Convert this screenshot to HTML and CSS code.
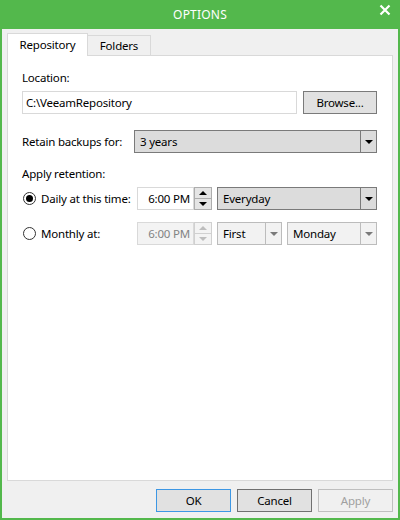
FILE: index.html
```html
<!DOCTYPE html>
<html lang="en">
<head>
    <meta charset="UTF-8">
    <title>Options</title>
    <link rel="stylesheet" href="styles.css">
</head>
<body>
    <div class="window">
        <div class="titlebar">
            <span class="title">OPTIONS</span>
            <span class="close">
                <svg width="12" height="12" viewBox="0 0 12 12">
                    <path d="M1.5 1.5 L10.5 10.5 M10.5 1.5 L1.5 10.5" stroke="#fff" stroke-width="2.2" fill="none"/>
                </svg>
            </span>
        </div>

        <div class="frame">
            <div class="tabs">
                <div class="tab active">Repository</div>
                <div class="tab">Folders</div>
            </div>

            <div class="panel">
                <div class="label">Location:</div>
                <div class="row location-row">
                    <div class="textbox">C:\VeeamRepository</div>
                    <div class="btn browse">Browse...</div>
                </div>

                <div class="row retain-row">
                    <span class="row-label">Retain backups for:</span>
                    <div class="combo retain">
                        <span class="combo-text">3 years</span>
                        <span class="combo-arrow"><i class="tri"></i></span>
                    </div>
                </div>

                <div class="label apply-label">Apply retention:</div>

                <div class="row option-row">
                    <span class="radio checked"></span>
                    <span class="option-label">Daily at this time:</span>
                    <div class="time">
                        <div class="time-box">6:00 PM</div>
                        <div class="spinner">
                            <span class="spin up"></span>
                            <span class="spin down"></span>
                        </div>
                    </div>
                    <div class="combo everyday">
                        <span class="combo-text">Everyday</span>
                        <span class="combo-arrow"><i class="tri"></i></span>
                    </div>
                </div>

                <div class="row option-row monthly">
                    <span class="radio"></span>
                    <span class="option-label">Monthly at:</span>
                    <div class="time disabled">
                        <div class="time-box">6:00 PM</div>
                        <div class="spinner">
                            <span class="spin up"></span>
                            <span class="spin down"></span>
                        </div>
                    </div>
                    <div class="combo disabled first">
                        <span class="combo-text">First</span>
                        <span class="combo-arrow"><i class="tri"></i></span>
                    </div>
                    <div class="combo disabled weekday">
                        <span class="combo-text">Monday</span>
                        <span class="combo-arrow"><i class="tri"></i></span>
                    </div>
                </div>
            </div>

            <div class="actions">
                <div class="btn default">OK</div>
                <div class="btn">Cancel</div>
                <div class="btn disabled">Apply</div>
            </div>
        </div>
    </div>
</body>
</html>
```

FILE: styles.css
```css
* { margin: 0; padding: 0; box-sizing: border-box; }
body {
    font-family: 'Noto Sans', 'Open Sans', sans-serif;
    font-size: 11.5px;
    letter-spacing: -0.2px;
    color: #000;
    background: #f0f0f0;
}
.window {
    width: 400px;
    height: 520px;
    display: flex;
    flex-direction: column;
}
.titlebar {
    height: 29px;
    background: #53b84c;
    color: #fff;
    display: flex;
    align-items: center;
    justify-content: center;
    position: relative;
}
.title { font-size: 12px; letter-spacing: 0.2px; }
.close {
    position: absolute;
    right: 9px;
    top: 4px;
    width: 12px;
    height: 12px;
    display: flex;
}
.frame {
    flex: 1;
    border: 2px solid #53b84c;
    border-top: none;
    padding: 4px 5px 0 5px;
    display: flex;
    flex-direction: column;
}

/* tabs */
.tabs {
    display: flex;
    align-items: flex-end;
    height: 22px;
}
.tab {
    height: 20px;
    width: 63px;
    text-align: center;
    border: 1px solid #d9d9d9;
    border-bottom: none;
    background: #f0f0f0;
    line-height: 19px;
}
.tab + .tab { border-left: none; }
.tab.active {
    width: 81px;
    height: 23px;
    margin-bottom: -1px;
    background: #fff;
    line-height: 22px;
    position: relative;
    z-index: 1;
}
.panel {
    height: 426px;
    background: #fff;
    border: 1px solid #d9d9d9;
    padding: 14px 15px 0 14px;
}
.label { line-height: 16px; }
.row { display: flex; align-items: center; }

.location-row { margin-top: 5px; gap: 6px; }
.textbox {
    width: 275px;
    height: 23px;
    border: 1px solid #d9d9d9;
    padding: 0 3px;
    line-height: 21px;
}
.btn {
    width: 75px;
    height: 23px;
    background: #e1e1e1;
    border: 1px solid #adadad;
    text-align: center;
    line-height: 21px;
}
.browse { width: 74px; border-color: #7a7a7a; }

.retain-row { margin-top: 16px; }
.row-label { width: 112px; }
.combo {
    height: 23px;
    display: flex;
    background: #dcdcdc;
    border: 1px solid #7a7a7a;
}
.combo-text {
    flex: 1;
    padding-left: 5px;
    line-height: 21px;
}
.combo-arrow {
    width: 16px;
    border-left: 1px solid #7a7a7a;
    display: flex;
    align-items: center;
    justify-content: center;
}
.tri {
    width: 0;
    height: 0;
    border-left: 4px solid transparent;
    border-right: 4px solid transparent;
    border-top: 4px solid #000;
}
.retain { width: 243px; }

.apply-label { margin-top: 13px; }
.option-row { margin-top: 5px; }
.monthly { margin-top: 12px; }
.radio {
    width: 13px;
    height: 13px;
    border: 1px solid #333;
    border-radius: 50%;
    margin-left: 1px;
    display: flex;
    align-items: center;
    justify-content: center;
}
.radio.checked::after {
    content: "";
    width: 7px;
    height: 7px;
    border-radius: 50%;
    background: #000;
}
.option-label { width: 101px; padding-left: 5px; }

.time { display: flex; width: 76px; }
.time-box {
    width: 57px;
    height: 23px;
    border: 1px solid #d9d9d9;
    background: #fff;
    text-align: right;
    padding-right: 3px;
    line-height: 21px;
}
.spinner { display: flex; flex-direction: column; width: 18px; height: 23px; }
.spin {
    flex: 1;
    background: #e5e5e5;
    border: 1px solid #adadad;
    display: flex;
    align-items: center;
    justify-content: center;
}
.spin + .spin { border-top: none; }
.spin::after {
    content: "";
    border-left: 4px solid transparent;
    border-right: 4px solid transparent;
}
.spin.up::after { border-bottom: 4px solid #000; }
.spin.down::after { border-top: 4px solid #000; }

.everyday { width: 160px; margin-left: 4px; }

.time.disabled .time-box { background: #f3f3f3; color: #838383; }
.time.disabled .spin { background: #f3f3f3; border-color: #d0d0d0; }
.time.disabled .spin.up::after { border-bottom-color: #bdbdbd; }
.time.disabled .spin.down::after { border-top-color: #bdbdbd; }
.combo.disabled { background: #f2f2f2; border-color: #bcbcbc; }
.combo.disabled .combo-arrow { border-left-color: #bcbcbc; }
.combo.disabled .tri { border-top-color: #7a7a7a; }
.first { width: 65px; margin-left: 4px; }
.weekday { width: 90px; margin-left: 5px; }

/* dialog buttons */
.actions {
    display: flex;
    justify-content: flex-end;
    gap: 6px;
    margin-top: 8px;
}
.btn.default { border-color: #3d97e4; }
.actions .btn:nth-child(2) { border-color: #707070; }
.btn.disabled { background: #f0f0f0; border-color: #bfbfbf; color: #a0a0a0; }
```
